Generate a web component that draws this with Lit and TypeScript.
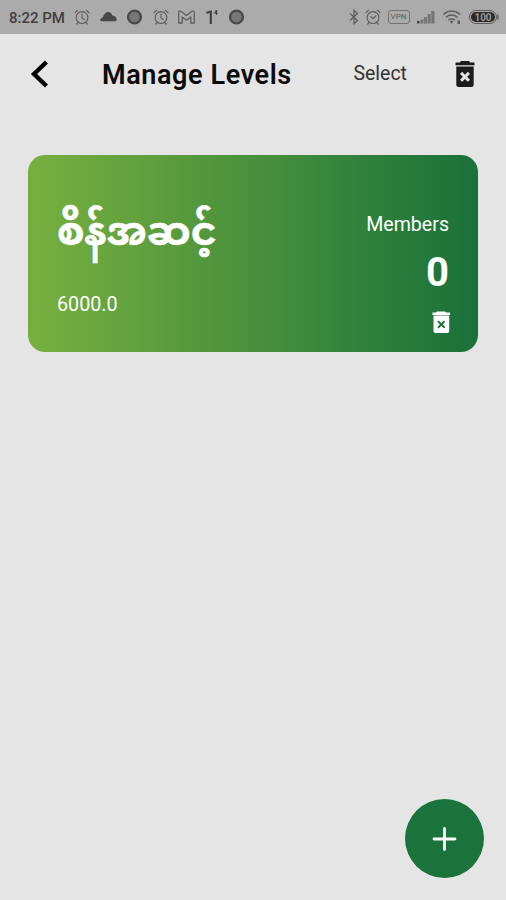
import { LitElement, html, svg, css } from "lit";
import { customElement } from "lit/decorators.js";

const alarm = html`<svg width="16" height="16" viewBox="0 0 16 16" fill="none" stroke="currentColor" stroke-width="1.2" stroke-linecap="round">
  <circle cx="8" cy="8.6" r="5.9"/><path d="M1 3.6 3.6 1.3M15 3.6 12.4 1.3M5.6 7.6 8 9.6 10.8 7M4 13.6 2.8 15M12 13.6 13.2 15"/></svg>`;
const alarmHand = html`<svg width="16" height="16" viewBox="0 0 16 16" fill="none" stroke="currentColor" stroke-width="1.2" stroke-linecap="round">
  <circle cx="8" cy="8.6" r="5.9"/><path d="M1 3.6 3.6 1.3M15 3.6 12.4 1.3M8 5.200V9l2.400 1.500M4 13.6 2.8 15M12 13.6 13.2 15"/></svg>`;
const disc = html`<svg width="16" height="16" viewBox="0 0 16 16"><circle cx="7.500" cy="8" r="6.4" fill="#777" stroke="#4a4a4a" stroke-width="2.400"/></svg>`;
const cloud = html`<svg width="18" height="16" viewBox="0 0 18 16"><path fill="#484848" d="M2.800 12.300C1.300 12.300.2 11.700.2 10.700c0-1.200 1.100-1.800 2.500-2.300C4.300 5 5.500 3 8 3c2.400 0 3.700 1.600 4.400 3.600 2.900.5 4.300 2 4.300 3.900 0 1.300-1 1.800-2.500 1.800z"/></svg>`;
const mail = html`<svg width="18" height="16" viewBox="0 0 18 16" fill="none" stroke="currentColor" stroke-width="1.300" stroke-linejoin="round"><path d="M.700 14V3.300C.700 1.700 2.200 1.500 3.300 2.400L8.500 6.500l5.200-4.100C14.800 1.500 16.300 1.700 16.300 3.300V14h-3.500V8L8.500 11.200 4.200 8V14z"/></svg>`;
const one = html`<svg width="14" height="16" viewBox="0 0 14 16" fill="none" stroke="#3c3c3c"><path stroke-width="2" d="M.300 3.900 4.800 2.500V15"/><path stroke-width="1" d="M10.500 5.800V1L8.500 4.200h3.200"/></svg>`;
const bluetooth = html`<svg width="10" height="16" viewBox="0 0 10 16" fill="none" stroke="currentColor" stroke-width="1.300"><path d="m1 4.500 7.500 7L5 14.800V1.200l3.500 3.300L1 11.500"/></svg>`;
const signal = html`<svg width="20" height="16" viewBox="0 0 20 16" fill="#757575"><path fill="#444" d="M1 12h2.500v2.500H1z"/><path d="M4.500 10.500h3v4h-3zM8.100 8h3v6.500h-3zM11.700 5h3v9.500h-3zM15.300 2h3.200v12.500h-3.200z"/></svg>`;
const wifi = html`<svg width="20" height="16" viewBox="0 0 20 16" fill="none" stroke="currentColor" stroke-width="1.500"><path d="M.200 5.400q8.500-6.600 17 0M2.900 8.400q5.800-4.600 11.600 0M5.400 11.200q3.300-2.600 6.600 0"/><path fill="currentColor" stroke="none" d="m6.600 12.600 2 2.200 2-2.200q-2-1.500-4 0zM14.500 11.500H17v3.500h-2.500z"/></svg>`;

/* Bin with a cross cut out of its body. */
const bin = svg`<path fill-rule="evenodd" d="M6 0h8l1.300 1.500H19.500V4.200H.5V1.500H4.700zM1.300 5.500H18.700V23.500Q18.700 26 16.200 26H3.800Q1.300 26 1.300 23.500zM10 13.700 7.100 10.800 5 12.900 7.900 15.800 5 18.700 7.100 20.800 10 17.900 12.900 20.800 15 18.700 12.100 15.800 15 12.900 12.900 10.800z"/>`;
const smallBin = svg`<path fill-rule="evenodd" d="M5 .5h8L14 1.500H18V4H.500V1.500H4zM1.500 4.600H17.200V20Q17.200 22 15.200 22H3.500Q1.500 22 1.500 20zM9.300 12 6.700 9.400 5.300 10.800 7.900 13.400 5.300 16 6.700 17.400 9.300 14.800 11.900 17.400 13.300 16 10.700 13.400 13.300 10.800 11.900 9.400z"/>`;

@customElement("status-bar")
class StatusBar extends LitElement {
  static styles = css`
    :host { display: flex; align-items: center; height: 34px; padding: 0 6px 0 9px; box-sizing: border-box;
      background: #ababab; color: #5f5f5f; font-family: Roboto, "Liberation Sans", sans-serif; }
    svg { display: block; flex: none; }
    .time { width: 65px; padding-top: 1px; font-size: 15px; font-weight: 500; color: #3f3f3f; white-space: nowrap; }
    .left { display: flex; align-items: center; gap: 9.500px; }
    .right { display: flex; align-items: center; gap: 6.500px; margin-left: auto; }
    .vpn { box-sizing: border-box; width: 22px; height: 14px; border: 1.500px solid #727272; border-radius: 3px;
      font-size: 8px; line-height: 12px; text-align: center; }
    .battery { box-sizing: border-box; width: 28px; height: 14px; border: 1px solid #5b5b5b; border-radius: 7px; padding: 1px; position: relative; }
    .battery::after { content: ""; position: absolute; right: -3px; top: 3px; width: 2px; height: 6px; border-radius: 0 2px 2px 0; background: #777; }
    .charge { background: #292929; color: #999; height: 10px; border-radius: 5px; font-size: 10px; line-height: 11px; font-weight: 700; text-align: center; }
    .end { margin-right: 3px; }
  `;
  render() {
    return html`<span class="time">8:22 PM</span>
      <div class="left">${alarmHand}${cloud}${disc}${alarmHand}${mail}${one}${disc}</div>
      <div class="right">${bluetooth}${alarm}<span class="vpn">VPN</span>${signal}${wifi}<div class="battery end"><div class="charge">100</div></div></div>`;
  }
}

@customElement("level-card")
class LevelCard extends LitElement {
  static styles = css`
    :host { display: flex; justify-content: space-between; box-sizing: border-box; height: 197px; border-radius: 17px;
      padding: 0 29px; color: #fff; background: linear-gradient(90deg, #76af3f 2%, #1a713a 99%);
      font-family: Roboto, "Noto Sans Myanmar", Padauk, sans-serif; }
    .info, .members { display: flex; flex-direction: column; }
    .name { margin-top: 44px; height: 66px; line-height: 66px; font-size: 39.500px; font-weight: 700; white-space: nowrap;
      -webkit-text-stroke: 0.500px #fff; }
    .points { margin-top: 28px; font-size: 19.700px; line-height: 24px; }
    .members { align-items: flex-end; }
    .label { margin-top: 58px; font-size: 19.600px; line-height: 24px; }
    .count { margin-top: 13px; font-size: 40px; line-height: 46px; font-weight: 700; }
    svg { display: block; margin: 15px -2px 0 0; fill: #fff; }
  `;
  render() {
    return html`<div class="info"><div class="name">စိန်အဆင့်</div><div class="points">6000.0</div></div>
      <div class="members"><div class="label">Members</div><div class="count">0</div>
      <svg width="19" height="23" viewBox="0 0 19 23">${smallBin}</svg></div>`;
  }
}

@customElement("app-root")
class AppRoot extends LitElement {
  static styles = css`
    :host { display: flex; flex-direction: column; height: 900px; background: #e5e5e5; color: #0c0c0c;
      font-family: Roboto, "Liberation Sans", sans-serif; }
    .header { display: flex; align-items: center; height: 80px; padding: 0 31px 0 30px; }
    svg { display: block; }
    h1 { margin: 2px 0 0 54px; font-size: 27px; line-height: 32px; font-weight: 600; letter-spacing: 0.600px; white-space: nowrap; }
    .select { margin-left: auto; font-size: 19.500px; line-height: 24px; font-weight: 400; color: #333; }
    .bin { margin-left: 48px; fill: #1c1c1c; }
    .list { flex: 1; padding: 41px 28px 0; }
    .add { align-self: flex-end; display: grid; place-items: center; width: 79px; height: 79px; margin: 0 22px 22px 0;
      border-radius: 50%; background: #1a733a; }
  `;
  render() {
    return html`<status-bar></status-bar>
      <div class="header">
        <svg width="18" height="28" viewBox="0 0 18 28" fill="none" stroke="#000" stroke-width="4.400"><path d="M16.500 2 4 14l12.500 12"/></svg>
        <h1>Manage Levels</h1><span class="select">Select</span>
        <svg class="bin" width="20" height="26" viewBox="0 0 20 26">${bin}</svg>
      </div>
      <div class="list"><level-card></level-card></div>
      <div class="add"><svg width="26" height="26" viewBox="0 0 26 26" fill="none" stroke="#fff" stroke-width="2.800" stroke-linecap="round"><path d="M12.500 2.500v21M2 13h21"/></svg></div>`;
  }
}
